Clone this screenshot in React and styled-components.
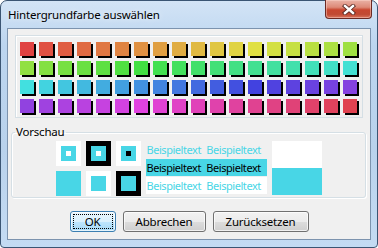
import React from "react";
import styled, { createGlobalStyle } from "styled-components";

const GlobalStyle = createGlobalStyle`
  html, body {
    margin: 0;
    padding: 0;
    background: #ffffff;
  }
  body {
    font-family: "Noto Sans", "Open Sans", sans-serif;
    font-size: 11px;
    letter-spacing: -0.2px;
    color: #000;
  }
`;

const CYAN = "#48d6e6";

const palette = Array.from({ length: 72 }, (_, i) => `hsl(${i * 5}, 72%, 57%)`);

const Window = styled.div`
  box-sizing: border-box;
  width: 378px;
  height: 248px;
  border: 1px solid #3b5573;
  border-radius: 7px 7px 4px 4px;
  background: linear-gradient(180deg, #d3e4f6 0%, #bcd5ef 18%, #b9d2ec 60%, #c4dbf3 100%);
  padding: 0 6px 7px 6px;
  display: flex;
  flex-direction: column;
`;

const TitleBar = styled.div`
  height: 27px;
  display: flex;
  align-items: flex-start;
`;

const Title = styled.div`
  padding: 6px 0 0 1px;
  font-size: 11.5px;
  line-height: 16px;
  color: #000;
  text-shadow: 0 0 6px rgba(255, 255, 255, 0.9);
`;

const CloseButton = styled.div`
  margin-left: auto;
  margin-right: -1px;
  margin-top: -1px;
  width: 47px;
  height: 19px;
  box-sizing: border-box;
  border: 1px solid #6b2a24;
  border-top: none;
  border-radius: 0 0 4px 4px;
  background: linear-gradient(180deg, #eab2a6 0%, #dd8a78 40%, #c8462f 55%, #c14a33 80%, #d9745d 100%);
  box-shadow: inset 0 0 0 1px rgba(255, 220, 210, 0.45);
  display: flex;
  align-items: center;
  justify-content: center;
`;

const Client = styled.div`
  flex: 1;
  background: #f0f0f0;
  border: 1px solid #7c93ae;
  display: flex;
  flex-direction: column;
`;

const PaletteBox = styled.div`
  margin: 6px 7px 0 7px;
  border: 1px solid #d5dfe5;
  box-shadow: inset 1px 1px 0 #ffffff;
  padding: 6px 4px 4px 4px;
  display: grid;
  grid-template-columns: repeat(18, 14px);
  grid-auto-rows: 14px;
  gap: 5px;
`;

const Square = styled.div`
  width: 14px;
  height: 14px;
  background: ${(p) => p.$color};
  box-shadow: 2px 2px 0 #000;
`;

const Group = styled.fieldset`
  margin: 6px 4px 0 3px;
  padding: 0 0 1px 0;
  border: 1px solid #d5dfe5;
  border-radius: 3px;
  box-shadow: inset 1px 1px 0 #ffffff, 1px 1px 0 #ffffff;
  min-width: 0;
`;

const Legend = styled.legend`
  margin-left: 3px;
  padding: 0 2px 0 1px;
  font-size: 11.5px;
  line-height: 16px;
`;

const Preview = styled.div`
  display: flex;
  justify-content: center;
  gap: 5px;
  padding-top: 1px;
`;

const SwatchGrid = styled.div`
  display: grid;
  grid-template-columns: repeat(3, 25px);
  grid-auto-rows: 25px;
  column-gap: 5px;
  row-gap: 5px;
`;

const Swatch = styled.div`
  background: ${(p) => p.$bg};
  display: flex;
  align-items: center;
  justify-content: center;
`;

const Inner = styled.div`
  width: 15px;
  height: 15px;
  background: ${CYAN};
  display: flex;
  align-items: center;
  justify-content: center;
`;

const Dot = styled.div`
  width: 5px;
  height: 5px;
  background: ${(p) => p.$color};
`;

const Samples = styled.div`
  width: 121px;
  display: flex;
  flex-direction: column;
  gap: 1px;
`;

const SampleRow = styled.div`
  height: 17px;
  line-height: 17px;
  padding-left: 1px;
  white-space: nowrap;
  font-size: 11px;
  letter-spacing: -0.45px;
  word-spacing: 3px;
  background: ${(p) => p.$bg};
  color: ${(p) => p.$fg};
`;

const ColorBlock = styled.div`
  width: 50px;
  height: 54px;
  display: flex;
  flex-direction: column;
`;

const BlockHalf = styled.div`
  flex: 1;
  background: ${(p) => p.$bg};
`;

const ButtonRow = styled.div`
  display: flex;
  justify-content: center;
  gap: 7px;
  margin-top: 13px;
`;

const Button = styled.div`
  box-sizing: border-box;
  width: ${(p) => p.$w}px;
  height: 21px;
  border: 1px solid ${(p) => (p.$default ? "#3c7fb1" : "#707070")};
  border-radius: 3px;
  background: ${(p) =>
    p.$default
      ? "linear-gradient(180deg, #eaf6fd 0%, #d9f0fc 50%, #bee6fd 51%, #a7d9f5 100%)"
      : "linear-gradient(180deg, #f2f2f2 0%, #ebebeb 50%, #dddddd 51%, #cfcfcf 100%)"};
  box-shadow: inset 0 0 0 1px rgba(255, 255, 255, 0.7);
  display: flex;
  align-items: center;
  justify-content: center;
  padding: 2px;
  font-size: 11.5px;
`;

const Focus = styled.div`
  flex: 1;
  align-self: stretch;
  border: 1px dotted #000;
  display: flex;
  align-items: center;
  justify-content: center;
  line-height: 14px;
`;

const CloseIcon = () => (
  <svg width="14" height="11" viewBox="0 0 14 11">
    <path d="M3 2 L11 9 M11 2 L3 9" stroke="#5a2a24" strokeWidth="4.2" strokeLinecap="square" />
    <path d="M3 2 L11 9 M11 2 L3 9" stroke="#ffffff" strokeWidth="2.4" strokeLinecap="square" />
  </svg>
);

const swatches = [
  { bg: "#ffffff", dot: "#ffffff" },
  { bg: "#000000", dot: "#ffffff" },
  { bg: "#ffffff", dot: "#000000" },
  { bg: CYAN, dot: null, solid: true },
  { bg: "#ffffff", dot: null },
  { bg: "#000000", dot: null },
];

const samples = [
  { bg: "transparent", fg: CYAN },
  { bg: CYAN, fg: "#000000" },
  { bg: "#ffffff", fg: CYAN },
];

export default function App() {
  return (
    <>
      <GlobalStyle />
      <Window>
        <TitleBar>
          <Title>Hintergrundfarbe auswählen</Title>
          <CloseButton>
            <CloseIcon />
          </CloseButton>
        </TitleBar>
        <Client>
          <PaletteBox>
            {palette.map((c, i) => (
              <Square key={i} $color={c} />
            ))}
          </PaletteBox>
          <Group>
            <Legend>Vorschau</Legend>
            <Preview>
              <SwatchGrid>
                {swatches.map((s, i) => (
                  <Swatch key={i} $bg={s.bg}>
                    {!s.solid && <Inner>{s.dot && <Dot $color={s.dot} />}</Inner>}
                  </Swatch>
                ))}
              </SwatchGrid>
              <Samples>
                {samples.map((s, i) => (
                  <SampleRow key={i} $bg={s.bg} $fg={s.fg}>
                    Beispieltext Beispieltext
                  </SampleRow>
                ))}
              </Samples>
              <ColorBlock>
                <BlockHalf $bg="#ffffff" />
                <BlockHalf $bg={CYAN} />
              </ColorBlock>
            </Preview>
          </Group>
          <ButtonRow>
            <Button $w={46} $default>
              <Focus>OK</Focus>
            </Button>
            <Button $w={83}>Abbrechen</Button>
            <Button $w={96}>Zurücksetzen</Button>
          </ButtonRow>
        </Client>
      </Window>
    </>
  );
}
